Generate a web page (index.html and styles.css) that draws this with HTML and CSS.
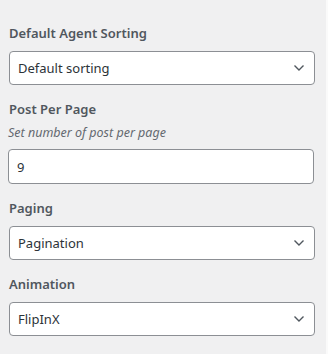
FILE: index.html
```html
<!DOCTYPE html>
<html lang="en">
<head>
<meta charset="UTF-8">
<title>Agent settings</title>
<link rel="stylesheet" href="styles.css">
</head>
<body>
  <div class="panel">
    <div class="field">
      <label class="field-label">Default Agent Sorting</label>
      <div class="select">
        <span>Default sorting</span>
        <svg width="12" height="8" viewBox="0 0 12 8"><path d="M1.5 1.5L6 6L10.5 1.5" fill="none" stroke="#50575e" stroke-width="1.4"/></svg>
      </div>
    </div>
    <div class="field">
      <label class="field-label">Post Per Page</label>
      <p class="help">Set number of post per page</p>
      <div class="text-input">9</div>
    </div>
    <div class="field">
      <label class="field-label">Paging</label>
      <div class="select">
        <span>Pagination</span>
        <svg width="12" height="8" viewBox="0 0 12 8"><path d="M1.5 1.5L6 6L10.5 1.5" fill="none" stroke="#50575e" stroke-width="1.4"/></svg>
      </div>
    </div>
    <div class="field">
      <label class="field-label">Animation</label>
      <div class="select">
        <span>FlipInX</span>
        <svg width="12" height="8" viewBox="0 0 12 8"><path d="M1.5 1.5L6 6L10.5 1.5" fill="none" stroke="#50575e" stroke-width="1.4"/></svg>
      </div>
    </div>
  </div>
</body>
</html>
```

FILE: styles.css
```css
body {
    margin: 0;
    background: #fafafa;
    font-family: "Noto Sans", "Open Sans", sans-serif;
    width: 328px;
    height: 354px;
}
.panel {
    width: 326px;
    height: 354px;
    box-sizing: border-box;
    background: #f0f0f1;
    padding: 23px 0 0 9px;
    display: flex;
    flex-direction: column;
    gap: 14px;
}
.field {
    display: flex;
    flex-direction: column;
}
.field-label {
    font-size: 13px;
    line-height: 20px;
    font-weight: 600;
    color: #50575e;
    margin-bottom: 8px;
}
.help {
    margin: -2px 0 8px -1px;
    font-size: 12.5px;
    line-height: 16px;
    font-style: italic;
    color: #646970;
}
.select, .text-input {
    width: 306px;
    height: 34px;
    box-sizing: border-box;
    border: 1px solid #8c8f94;
    border-radius: 4px;
    background: #fff;
    color: #2c3338;
    font-size: 13px;
    display: flex;
    align-items: center;
    padding: 0 9px 0 8px;
}
.select {
    justify-content: space-between;
}
.text-input {
    margin-left: -1px;
    height: 35px;
}
```
